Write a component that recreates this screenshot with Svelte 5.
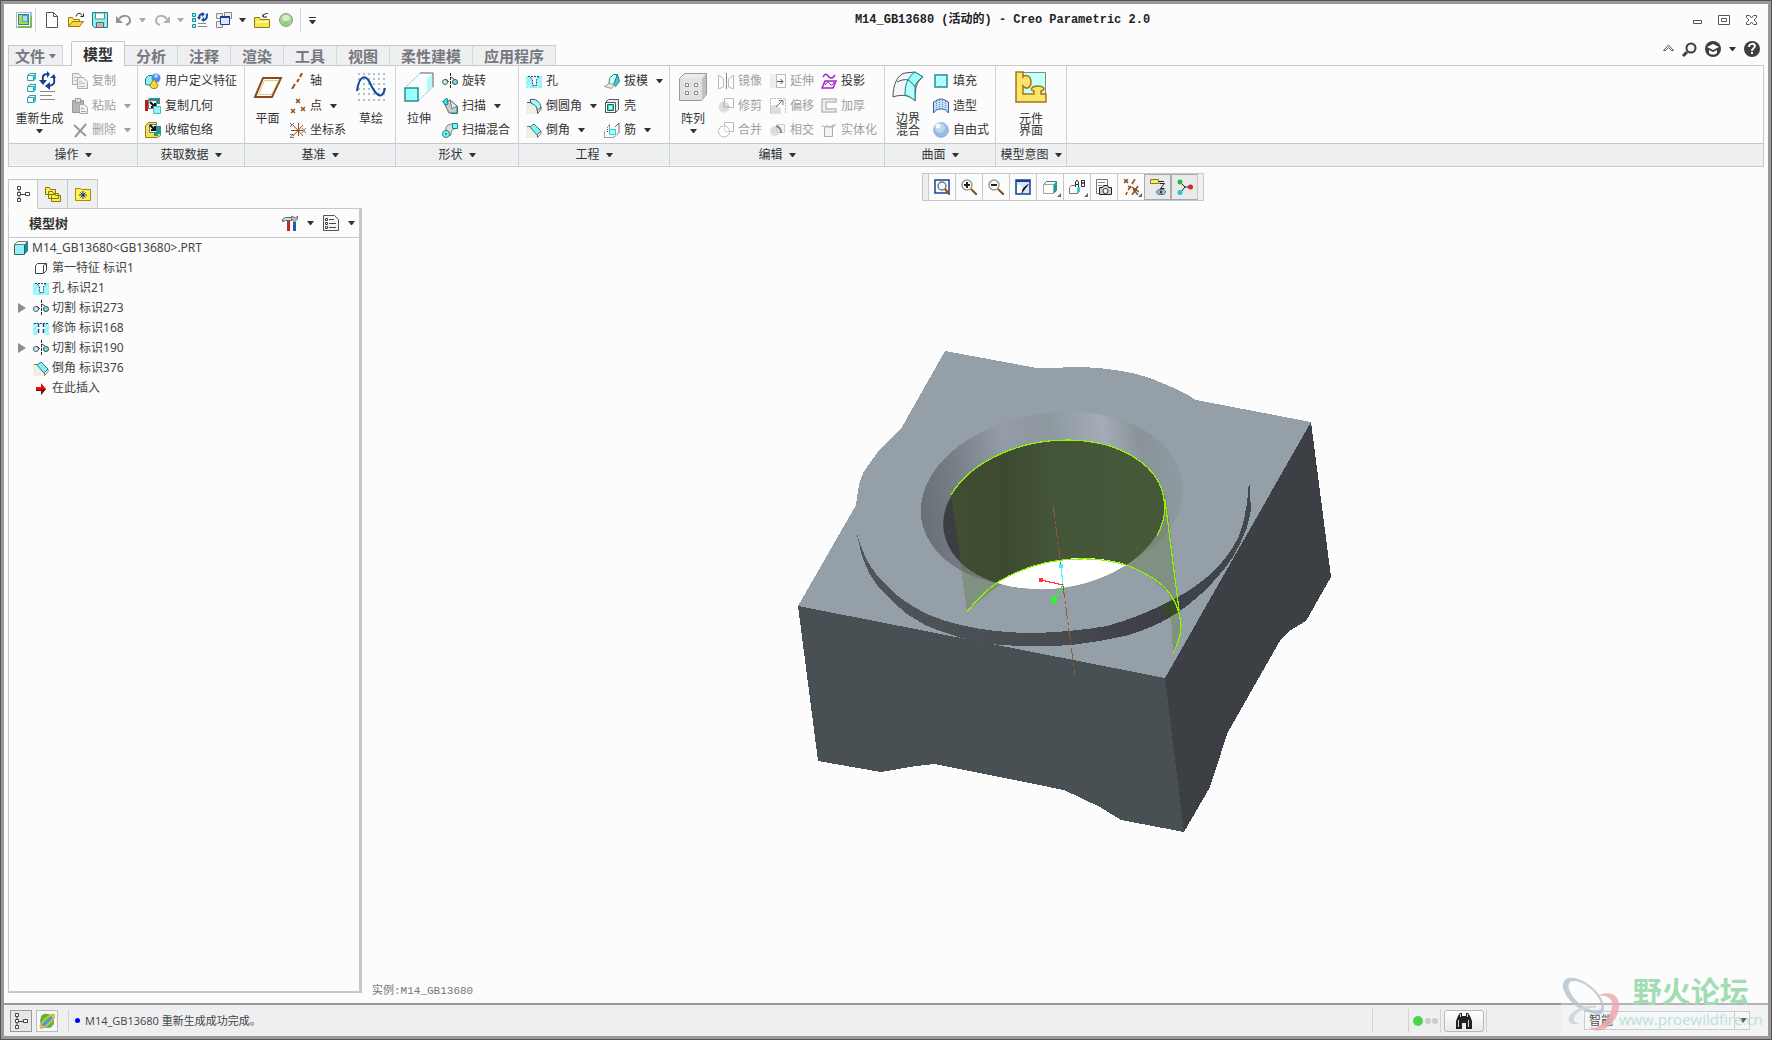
<script lang="ts">
  interface Command {
    label: string;
    icon: string;
    menu?: boolean;
    off?: boolean;
  }

  type Block = { big: Command } | { rows: Command[] };

  interface Group {
    id: string;
    label: string;
    blocks: Block[];
  }

  const tabs = ['模型', '分析', '注释', '渲染', '工具', '视图', '柔性建模', '应用程序'];
  let activeTab = $state('模型');
  let filter = $state('智能');

  const groups: Group[] = [
    {
      id: 'ops',
      label: '操作',
      blocks: [
        { big: { label: '重新生成', icon: 'regen', menu: true } },
        {
          rows: [
            { label: '复制', icon: 'copy', off: true },
            { label: '粘贴', icon: 'paste', menu: true, off: true },
            { label: '删除', icon: 'remove', menu: true, off: true },
          ],
        },
      ],
    },
    {
      id: 'data',
      label: '获取数据',
      blocks: [
        {
          rows: [
            { label: '用户定义特征', icon: 'udf' },
            { label: '复制几何', icon: 'copygeom' },
            { label: '收缩包络', icon: 'shrink' },
          ],
        },
      ],
    },
    {
      id: 'datum',
      label: '基准',
      blocks: [
        { big: { label: '平面', icon: 'plane' } },
        {
          rows: [
            { label: '轴', icon: 'axis' },
            { label: '点', icon: 'point', menu: true },
            { label: '坐标系', icon: 'csys' },
          ],
        },
        { big: { label: '草绘', icon: 'sketch' } },
      ],
    },
    {
      id: 'shape',
      label: '形状',
      blocks: [
        { big: { label: '拉伸', icon: 'extrude' } },
        {
          rows: [
            { label: '旋转', icon: 'revolve' },
            { label: '扫描', icon: 'sweep', menu: true },
            { label: '扫描混合', icon: 'blend' },
          ],
        },
      ],
    },
    {
      id: 'eng',
      label: '工程',
      blocks: [
        {
          rows: [
            { label: '孔', icon: 'hole' },
            { label: '倒圆角', icon: 'round', menu: true },
            { label: '倒角', icon: 'chamfer', menu: true },
          ],
        },
        {
          rows: [
            { label: '拔模', icon: 'draft', menu: true },
            { label: '壳', icon: 'shell' },
            { label: '筋', icon: 'rib', menu: true },
          ],
        },
      ],
    },
    {
      id: 'edit',
      label: '编辑',
      blocks: [
        { big: { label: '阵列', icon: 'pattern', menu: true } },
        {
          rows: [
            { label: '镜像', icon: 'mirror', off: true },
            { label: '修剪', icon: 'trim', off: true },
            { label: '合并', icon: 'merge', off: true },
          ],
        },
        {
          rows: [
            { label: '延伸', icon: 'extend', off: true },
            { label: '偏移', icon: 'offset', off: true },
            { label: '相交', icon: 'intersect', off: true },
          ],
        },
        {
          rows: [
            { label: '投影', icon: 'project' },
            { label: '加厚', icon: 'thicken', off: true },
            { label: '实体化', icon: 'solidify', off: true },
          ],
        },
      ],
    },
    {
      id: 'surf',
      label: '曲面',
      blocks: [
        { big: { label: '边界\n混合', icon: 'boundary' } },
        {
          rows: [
            { label: '填充', icon: 'fill' },
            { label: '造型', icon: 'style' },
            { label: '自由式', icon: 'ball' },
          ],
        },
      ],
    },
    {
      id: 'intent',
      label: '模型意图',
      blocks: [{ big: { label: '元件\n界面', icon: 'component' } }],
    },
  ];

  const tree = [
    { label: '第一特征 标识1', icon: 'feature' },
    { label: '孔 标识21', icon: 'hole' },
    { label: '切割 标识273', icon: 'revolve', branch: true },
    { label: '修饰 标识168', icon: 'cosmetic' },
    { label: '切割 标识190', icon: 'revolve', branch: true },
    { label: '倒角 标识376', icon: 'chamfer' },
    { label: '在此插入', icon: 'insert' },
  ];

  const viewTools = [
    { title: '重新调整', icon: 'refit' },
    { title: '放大', icon: 'zoomin' },
    { title: '缩小', icon: 'zoomout' },
    { title: '重画', icon: 'repaint' },
    { title: '显示样式', icon: 'display', more: true },
    { title: '已命名视图', icon: 'named', more: true },
    { title: '视图管理器', icon: 'camera' },
    { title: '基准显示', icon: 'datums', more: true },
    { title: '注释显示', icon: 'notes', on: true },
    { title: '旋转中心', icon: 'spin', on: true },
  ];

  const cross = (x: number, y: number) => `M${x} ${y}l4 4m0-4l-4 4`;

  // 32-unit drawings, everything else sits on a 16-unit grid
  const large = ['regen', 'plane', 'sketch', 'extrude', 'pattern', 'boundary', 'component'];

  const icons: Record<string, string> = {
    app: '<path fill="#9fc0dd" d="M0 0h16v16H0z"/><path fill="#fff" d="M1 1h13v13H1z"/><path fill="#2c8794" d="M2 2h11v11H2z"/><path fill="#b4dc3c" d="M3 3h9v9H3z"/><path fill="#4c9fc0" d="M6 3h6v7H6z"/><path fill="#a7dcea" d="M7 4h4v5H7z"/><path fill="#82b94f" d="M2 14h14v2H2zM14 4h2v11h-2z"/>',
    new: '<path fill="#fff" stroke="#555" d="M2.500.5h7l4 4v11h-11z"/><path fill="none" stroke="#555" d="M9.500.5v4h4"/>',
    open: '<path fill="#ffe95a" stroke="#9a7a1c" d="M.5 14.500v-9h4l1 2h6v2"/><path fill="#f6d83c" stroke="#9a7a1c" d="M.5 14.500l4-5h11l-4 5z"/><path fill="none" stroke="#222" d="M8 4.500c1-4 5-4 6-1m1.500-2v3h-3"/>',
    save: '<path fill="#8ff0f3" stroke="#1b7d88" d="M.5.5h15v15H2.500l-2-2z"/><path fill="#fff" stroke="#4f8e96" d="M3.500 1h9v6h-9z"/><path fill="#bbb" stroke="#666" d="M4.500 10.500h7v5h-7z"/>',
    undo: '<path fill="none" stroke="#929498" stroke-width="2" d="M3 7c4-5 11-4 11 2 0 2-1 3-4 4"/><path fill="#929498" d="M0 4v7h7z"/>',
    redo: '<path fill="none" stroke="#b0b2b6" stroke-width="2" d="M13 7C9 2 2 3 2 9c0 2 1 3 4 4"/><path fill="#b0b2b6" d="M16 4v7H9z"/>',
    regenSmall: '<g fill="#8ff5f7" stroke="#148f96"><path d="M.5 1.500h3v3h-3zM.5 6.500h3v3h-3zM.5 12.500h3v3h-3z"/></g><path fill="none" stroke="#1a4a9c" stroke-width="2" d="M7 6c0-3 1-4 4-4m4 1c0 3-1 5-4 5"/><path fill="#1a4a9c" d="M10 0v5l3-3zM5 5h4L7 8zM13 3h3V1zM12 5v5L9 8z"/><path stroke="#888" d="M6 11.500h8M6 14.500h9"/>',
    windows: '<g fill="#eee" stroke="#888"><path d="M.5 1.500h6v5h-6zM8.500.5h7v6h-7zM.5 9.500h6v6h-6z"/></g><path fill="#dbe6fb" stroke="#1a3f94" d="M4.500 4.500h9v8h-9z"/><path fill="#1a3f94" d="M4 4h10v2H4z"/>',
    closeFolder: '<path fill="#f9e64a" stroke="#8e7a18" d="M.5 15.500v-10h5l1 2h9v8z"/><path fill="#fff59a" d="M2 9h12v2H2z"/><path fill="none" stroke="#222" d="M9 4.500c1-3 3-3 5-3M9 2v3h4"/>',
    greenBall: '<circle cx="8" cy="8" r="6.500" fill="#a9cf98" stroke="#8b9b85"/><ellipse cx="8" cy="6" rx="4" ry="3" fill="#d5ecca"/><ellipse cx="8" cy="11" rx="3" ry="2" fill="#8fd070"/>',
    regen: '<g fill="#e6ffff" stroke="#3b9a9f"><path d="M3.500 4.500h6v5h-6zM3.500 15.500h6v5h-6zM3.500 26.500h6v5h-6z"/></g><path fill="#1fc4cc" d="M10 4l2-2v6l-2 2zM10 15l2-2v6l-2 2zM10 26l2-2v6l-2 2z"/><path fill="none" stroke="#3b9a9f" d="M4 4l2-1.500h6M4 15l2-1.500h6M4 26l2-1.500h6"/><path fill="none" stroke="#173f93" stroke-width="2" d="M19 10c-1-5 0-7 5-7m6 4c1 5 0 7-5 8"/><path fill="#173f93" d="M23 0v7l3-4zM15 9h8l-4 5zM26 7h6l-2-4zM26 11v8l-5-4z"/><path stroke="#888" d="M16 20.500h15M16 24.500h12M16 28.500h15"/>',
    copy: '<g fill="#eee" stroke="#aaa"><path d="M.5.5h6l3 3v8h-9z"/><path d="M5.500 4.500h6l4 4v7h-10z"/></g><path stroke="#bbb" d="M2 4.500h4M2 7.500h3M7 8.500h3M7 10.500h6M7 13.500h6"/>',
    paste: '<path fill="#b5b5b5" stroke="#999" d="M.5 2.500h11v12H.5z"/><path fill="#ddd" stroke="#999" d="M3.500.5h5v4h-5z"/><path fill="#eee" stroke="#aaa" d="M7.500 6.500h5l3 3v6h-8z"/><path stroke="#aaa" d="M9 10.500h3M9 13.500h5"/>',
    remove: '<path fill="none" stroke="#999" stroke-width="2" d="M2 3l12 11M14 2L3 15"/>',
    udf: '<path fill="#8ff0f3" stroke="#188" d="M.5 5.500l3-3h6v6l-3 4-6-1z"/><circle cx="11" cy="5" r="4.500" fill="#4a8fe8"/><circle cx="11" cy="3" r="2" fill="#a9cdfa"/><path fill="#f2d548" stroke="#977d10" d="M9 6l4 6c0 5-8 5-8 0z"/>',
    copygeom: '<path fill="#2a8f93" d="M3 1l2-1h10v6H3z"/><path fill="#c61a1a" d="M0 2h3v11H0z"/><path fill="#d9ffff" stroke="#777" d="M3.500 2.500h8v8h-8z"/><path fill="none" stroke="#111" stroke-width="2" d="M5 4l5 5M10 5v4H6"/><path fill="#8ff5f7" stroke="#59b7bb" d="M8.500 8.500h7v7h-7z"/>',
    shrink: '<path fill="#f4e04c" stroke="#94801d" d="M.5 3.500l3-3h8v4l4 1v8l-3 2H.5z"/><path fill="#d9ffff" stroke="#777" d="M4.500 2.500h7v8h-7z"/><path fill="none" stroke="#111" stroke-width="2" d="M5 3l5 5M10 4v4H6"/><path fill="#1b9a9e" d="M12 4h4v8h-4zM9 10h4v4H9z"/>',
    plane: '<path fill="#fff" stroke="#8a4a20" stroke-width="2" d="M11 7h18l-9 19H3z"/><path fill="none" stroke="#d7cf86" d="M12.500 9.500h14l-7 14h-13z"/>',
    axis: '<path stroke="#96501e" stroke-width="2" d="M12 0l-2 4M9 6l-2 3M5 11l-3 5"/>',
    point: `<path fill="none" stroke="#96501e" stroke-width="1.500" d="${cross(6, 1)}${cross(1, 11)}${cross(11, 9)}"/>`,
    csys: '<path fill="none" stroke="#96501e" d="M8.500 1v13M1 8.500h12M3 3l10 11M13 3L3 14"/><path fill="none" stroke="#777" d="M0 1l2 2M4 1L0 5M12 6l4 5M16 6l-4 5M0 12.500h3l-3 3h4"/>',
    sketch: '<path fill="none" stroke="#aebfd0" stroke-width="2" stroke-dasharray="2 3" d="M3 3h28M3 8h28M3 13h28M3 18h28M3 23h28M3 29h28"/><path fill="none" stroke="#174a9a" stroke-width="2" d="M2 20C4 4 11 3 15 12c5 11 12 19 15 5"/>',
    extrude: '<path fill="#f4fefe" stroke="#aaa" stroke-dasharray="2 1" d="M2 17L17 2h13v14L15 30z"/><path fill="#b2f8f8" d="M30 2v14l-6 5V8z"/><path fill="#9affff" stroke="#298d91" stroke-width="1.500" d="M2 17h13v13H2z"/><path fill="none" stroke="#777" d="M17 2h13v14"/>',
    revolve: '<path fill="none" stroke="#222" stroke-dasharray="3 1" d="M8.500 0v16"/><circle cx="3" cy="9" r="2.500" fill="#baf8fa" stroke="#555"/><circle cx="13" cy="9" r="2.500" fill="#70e5e8" stroke="#444"/><path fill="none" stroke="#444" d="M4 6l3 3m2-5l3 2"/>',
    sweep: '<path fill="#ccc" stroke="#666" d="M2 5l6-3 7 6v7H7z"/><path fill="#d5f4f4" stroke="#777" d="M8 2l7 6-5 3z"/><path fill="#48dfdd" stroke="#108888" d="M.5 3.500L5 0l1 6-2 1z"/><path fill="none" stroke="#188" d="M15.500 8v7.500H9"/>',
    blend: '<path fill="#ddd" stroke="#777" d="M4 14V7c0-4 3-5 8-5l3 4c-5 1-6 3-6 7z"/><path fill="#8ff0f3" stroke="#188" d="M10.500 1.500h5v5h-5z"/><circle cx="4" cy="12" r="3.500" fill="#8ff0f3" stroke="#188"/><circle cx="4" cy="12" r="1" fill="#176"/>',
    hole: '<path fill="#8df3f6" d="M0 3h4l2 4v6h5V7l2-4h3v12H0z"/><path stroke="#d8ffff" d="M0 8l4-4M0 14l5-6M2 15l4-4M11 11l4-5M11 15l5-6"/><path fill="none" stroke="#17488e" stroke-dasharray="2 1" d="M2 3.500h12M4.500 4L6.500 7v5.500h4V7l2-3"/>',
    cosmetic: '<path fill="#8df3f6" d="M0 3h4v12H0zM12 3h4v12h-4z"/><path stroke="#d8ffff" d="M0 8l4-4M0 14l4-5M12 9l4-5M12 15l4-5"/><path fill="none" stroke="#17488e" stroke-width="1.500" stroke-dasharray="4 2" d="M5.500 3v12M10.500 3v12"/><path stroke="#17488e" stroke-dasharray="2 1" d="M1 3.500h14"/>',
    round: '<path fill="#f0efe5" d="M0 5h7l5 5v6H0z"/><path fill="#9ff" stroke="#555" d="M4 1.500c6-1 10 2 11 8l-4 3c0-4-2-6-6-7z"/><path fill="none" stroke="#555" d="M1 4.500h4M11.500 12v3.500l3.500-4V9"/>',
    chamfer: '<path fill="#f0efe5" d="M0 5h6l6 6v5H0z"/><path fill="#86efef" stroke="#1a8588" d="M4 5l4-3 7 7-4 4z"/><path fill="none" stroke="#777" d="M1 4.500h4M11.500 12v3.500l3.500-4V9"/>',
    draft: '<path fill="#d9ffff" stroke="#188" d="M5.500 5.500l4-4h4l-3 10H5z"/><path fill="#42cccc" stroke="#188" d="M13.500 1.500l2 7-4 5-2-2z"/><path fill="#eceade" stroke="#999" d="M.5 13.500l5-3 5 1-3 4z"/>',
    shell: '<path fill="#eee" stroke="#555" d="M1.500 4.500l3-3h10v10l-3 3h-10z"/><path fill="#fff" stroke="#555" d="M1.500 4.500h10v10h-10z"/><path fill="#48dcdc" stroke="#174" d="M3.500 6.500h6v6h-6z"/><path fill="#c9ffff" d="M5 8h3v3H5z"/>',
    rib: '<path fill="none" stroke="#444" stroke-dasharray="1 1" d="M.5 9.500v6h10M3.500 10V5.500l2-3v5h6v3M10 15l5-4"/><path fill="#9ff" stroke="#3ccccc" d="M5.500 7.500h6v5h-6z"/><path fill="none" stroke="#666" d="M11 5l4-4v10"/>',
    pattern: '<path fill="#e2e2e4" stroke="#999" d="M2.500 7.500l5-5h22v21l-5 6h-22z"/><path fill="#bfc0c3" d="M25 8l4-5v20l-4 5z"/><path fill="#ececee" d="M4 7l4-4h20l-4 4z"/><g fill="#fff" stroke="#888"><path d="M8.500 12.500h3v3h-3zM17.500 12.500h3v3h-3zM8.500 20.500h3v3h-3zM17.500 20.500h3v3h-3z"/></g>',
    mirror: '<path fill="none" stroke="#bbb" d="M.5 2l5 4v8l-5 2zM15.500 2l-5 4v8l5 2z"/><path stroke="#888" d="M8.500 0v16"/>',
    trim: '<path fill="#fff" stroke="#bbb" d="M6.500.5h9v9h-9z"/><circle cx="6" cy="9" r="5.500" fill="#ddd"/><path fill="none" stroke="#aaa" d="M6 3.500v5.500h6"/>',
    merge: '<path fill="#fff" stroke="#bbb" d="M6.500.5h9v9h-9z"/><circle cx="6" cy="9.500" r="5.500" fill="#fff" stroke="#bbb"/><path fill="none" stroke="#ddd" d="M6.500 4v5.500H11"/>',
    extend: '<path fill="#eee" d="M0 1h7v14H0z"/><path fill="none" stroke="#bbb" d="M6.500 1.500h9v13h-9z"/><path fill="none" stroke="#555" d="M7 8.500h6M10.500 6l2.500 2.500-2.500 2.500"/>',
    offset: '<path fill="#ddd" d="M0 7h6l5 4v5H0z"/><path fill="none" stroke="#bbb" stroke-dasharray="2 1" d="M.5 15V.5h15V15"/><path fill="none" stroke="#777" d="M6 9l7-7M9 2.500h4V7"/>',
    intersect: '<circle cx="5" cy="9" r="5" fill="#ddd"/><path fill="#f2f2f2" stroke="#ccc" d="M7.500 2.500h7v8h-7z"/><path fill="none" stroke="#888" stroke-width="2" d="M6 4c4 1 5 3 5 7"/>',
    project: '<path fill="none" stroke="#a41fd8" stroke-width="1.500" d="M2 4c3-5 4-2 6 0s4 1 6-2"/><path fill="none" stroke="#a41fd8" stroke-width="1.500" d="M4 8h11l-3 7H1z"/><path fill="none" stroke="#56256c" d="M4 12c2-4 4-3 5-1s3 1 4-2"/>',
    thicken: '<path fill="#f1f1f1" stroke="#bbb" stroke-width="1.500" d="M15 1H1v13h14v-3H5V4h10z"/>',
    solidify: '<path fill="#f3f3f3" stroke="#aaa" d="M3.500 14.500v-9l3-2 2 2 4-3-1 3v9z"/><path fill="none" stroke="#aaa" d="M0 5c2-3 4 1 6 0s6 2 9-3"/>',
    boundary: '<path fill="#f1f5f5" stroke="#555" d="M1 26C1 14 5 4 13 2l10-1 8 5c-7 5-8 12-8 24-5-6-14-7-22-4z"/><path fill="#9ff" stroke="#167d81" d="M16 9c2-4 4-6 7-8l8 5c-5 3-7 6-8 10-2-3-5-5-7-7z"/><path fill="#b5ffff" stroke="#167d81" d="M13 24c0-7 1-11 3-15 3 2 5 4 7 7v14c-3-3-6-5-10-6z"/><path fill="none" stroke="#555" d="M5 11c4-2 8-3 11-2"/>',
    fill: '<path fill="#baffff" stroke="#1a9296" stroke-width="1.500" d="M2 2h12v12H2z"/><path stroke="#8eeef0" d="M3 10l7-7M6 13l7-7"/>',
    style: '<path fill="#c8dcf3" stroke="#345f95" d="M.5 15V4C4 3 4 1 8 1s4 2 7.500 3v11C13 12 12 11 8 11s-5 1-7.500 4z"/><path stroke="#5f8fc7" stroke-dasharray="1 1" d="M3.500 3v9M6.500 2v9M9.500 2v9M12.500 3v9"/>',
    ball: '<circle cx="8" cy="8" r="7.500" fill="#97b9e2" stroke="#7d9fc8" stroke-width=".5"/><circle cx="7" cy="6" r="5" fill="#bdd7f2"/><circle cx="5" cy="4" r="2.500" fill="#f4faff"/>',
    component: '<path fill="#c7ffff" stroke="#7b8f71" d="M1.500 1.500h29v29h-29z"/><path fill="#fbe568" stroke="#a37514" stroke-width="1.500" d="M1 1h7v5c3-3 8-1 8 5s-5 8-8 4v8h11v-3c-5-1-2-5 4-5s8 4 3 5v3h5v8H1z"/>',
    tree: '<g fill="#fff" stroke="#444"><path d="M2.500.5h3v3h-3zM2.500 6.500h3v3h-3zM2.500 12.500h3v3h-3zM10.500 6.500h4v3h-4z"/><path d="M4 4v2M4 10v2M6 8.500h4"/></g>',
    folders: '<g fill="#fdf14c" stroke="#8b7412"><path d="M.5 8.500v-7h4l1 2h5v5zM3.500 12.500v-7h4l1 2h5v5zM6.500 15.500v-7h3l1 1h5v6z"/></g>',
    star: '<path fill="#fdf14c" stroke="#a18c12" d="M.5 14.500v-12h5l1 1h9v11z"/><path stroke="#102e97" d="M8 5v8M4 9h8M5.500 6.500l5 5M10.500 6.500l-5 5"/>',
    tools: '<path fill="#c52819" d="M5 6h3v10H5z"/><path fill="#cde3e1" stroke="#566" d="M.5 6.500v-2l3-2h6v3h-6z"/><path fill="#225caf" d="M11 7h3v9h-3z"/><path fill="#bbb" stroke="#777" d="M9.500 1v3l3 3 3-3V1l-2 2z"/>',
    list: '<path fill="#f6f8ef" stroke="#555" d="M.5.5h11l4 4v11H.5z"/><path stroke="#444" d="M6 4.500h5M6 8.500h7M6 12.500h7"/><path fill="none" stroke="#444" d="M2.500 3.500h2v2h-2zM2.500 7.500h2v2h-2zM2.500 11.500h2v2h-2z"/>',
    part: '<path fill="#0b9599" d="M12 4l3-3v10l-3 3z"/><path fill="#8ff5f7" stroke="#555" d="M1.500 4.500h10v10h-10z"/><path fill="#efffff" stroke="#777" d="M1.500 4.500l3-3h10l-3 3z"/>',
    feature: '<path fill="#17979a" d="M10 6l3-3v7l-3 3z"/><path fill="#fff" stroke="#444" d="M2.500 5.500l2-2h9v7l-3 3h-8zM10.500 13V5.500l3-2"/>',
    insert: '<path fill="#e50c0c" d="M3 7h5V3l5 6-5 6v-4H3z"/><path fill="#7b0808" d="M3 10h5v-1h5l-5 6v-4H3z"/>',
    refit: '<path fill="#fff" stroke="#1d418f" stroke-width="1.500" d="M1 1h14v13H1z"/><circle cx="8" cy="7" r="4" fill="#eefbff" stroke="#777" stroke-width="1.500"/><path stroke="#86501d" stroke-width="2" d="M11 10l5 6"/>',
    zoomin: '<circle cx="6" cy="6" r="5" fill="#fff" stroke="#999" stroke-width="1.500"/><path stroke="#222" stroke-width="2" d="M3 6h6M6 3v6"/><path stroke="#86501d" stroke-width="2" d="M10 10l6 6"/>',
    zoomout: '<circle cx="6" cy="6" r="5" fill="#fff" stroke="#999" stroke-width="1.500"/><path stroke="#222" stroke-width="2" d="M3 6h6"/><path stroke="#86501d" stroke-width="2" d="M10 10l6 6"/>',
    repaint: '<path fill="#d3e7f8" stroke="#17408f" stroke-width="1.500" d="M1 1h14v14H1z"/><path fill="#17408f" d="M1 1h14v2H1z"/><path fill="#fff" d="M2 14V6c5 0 7 2 4 8z"/><path stroke="#333" stroke-dasharray="1 1" d="M7 14c0-3 1-6 7-9"/>',
    display: '<path fill="#e6ffff" stroke="#578" d="M1.500 5.500l3-3h10v9l-3 3h-10z"/><path fill="#1a9b9e" d="M11 6l4-4v9l-4 4z"/><path fill="#fff" stroke="#9aa" d="M1.500 5.500h10v9h-10z"/>',
    named: '<path fill="#fff" stroke="#777" d="M.5 14.500v-6l2-2h8v6l-2 2z"/><path fill="#36cccc" d="M8 9l3-2v5l-3 3z"/><path fill="#fff" d="M6 0h10v8H6z"/><path fill="none" stroke="#333" d="M6.500 8V3L8 1l1.500 2v5M7 5.500h2M12.500 1v6.500h3V4h-3 3V1.500h-3"/>',
    camera: '<path fill="#fff" stroke="#777" d="M.5.5h11v14H.5z"/><path stroke="#888" d="M2 3.500h7M2 6.500h4"/><path fill="#ccc" stroke="#222" d="M3.500 8.500h3l1-2h4l1 2h3v7h-12z"/><circle cx="9.500" cy="12" r="2.500" fill="#fff" stroke="#333"/>',
    datums: `<path fill="none" stroke="#86501d" stroke-width="1.500" d="${cross(1, 0)}M12 0l-3 5M8 7l-3 4M4 13l-1 3M5 7l3 2M10 10l5 6M15 7l-6 9M9 8l7 5"/>`,
    notes: '<path fill="#f8ef69" stroke="#8e7a18" d="M.5.5h8v4h-8z"/><path fill="none" stroke="#222" d="M9 2.500h5M9.500 4.500h5l-4 5h4"/><ellipse cx="11" cy="13" rx="4.500" ry="2.500" fill="#b9c6d1" stroke="#536679"/><circle cx="11" cy="13" r="1.500" fill="#25425b"/>',
    spin: '<path fill="none" stroke="#222" d="M3 3l5 5h6M8 8l-5 6"/><circle cx="3" cy="3" r="2.500" fill="#23bd28"/><circle cx="13.500" cy="8" r="2.500" fill="#e32121"/><circle cx="3" cy="13.500" r="2.500" fill="#24c8c8"/>',
    globe: '<circle cx="8" cy="8" r="7" fill="#36a6e1"/><path fill="#59b82c" d="M2 3c4-4 8-2 10 0l-4 4-6 3zM9 14l5-7 1 4-4 4z"/><path fill="none" stroke="#e2b82a" stroke-width="2" d="M2 15c-3-3 9-15 13-13 2 3-8 13-13 13z"/>',
    binoculars: '<path fill="#222" d="M2 3l2-3h2v3h4V0h2l2 3 2 5v8h-6v-6H8L6 10v6H0V8z"/><path fill="#d7dbc5" d="M2 7h1v7H2zM12 7h1v7h-1zM4 1h1v3H4zM11 1h1v3h-1z"/>',
    up: '<path fill="#fff" stroke="#555" d="M2.500 9.500L7.500 4l5 5.500h-2l-3-3-3 3z"/>',
    search: '<circle cx="10" cy="7" r="4.500" fill="#eff9fd" stroke="#3d3e40" stroke-width="2"/><path stroke="#3d3e40" stroke-width="3" d="M6 11l-4 4"/>',
    learn: '<circle cx="8" cy="8" r="8" fill="#3d3e40"/><path fill="#fff" d="M2 6l6-3 6 3-6 3zM4 9l4 2 4-2v3c-2 2-6 2-8 0z"/>',
    help: '<circle cx="8" cy="8" r="8" fill="#3d3e40"/><path fill="none" stroke="#fff" stroke-width="2" d="M5 6c0-4 6-4 6-1 0 2-3 2-3 5M8 11v2"/>',
    minimise: '<path fill="#fff" stroke="#555" d="M4.500 8.500h8v3h-8z"/>',
    maximise: '<path fill="#fff" stroke="#555" d="M2.500 3.500h11v9h-11zM5.500 6.500h5v3h-5z"/>',
    close: '<path fill="#fff" stroke="#555" d="M3.500 3.500h3L8.500 6l2-2.500h3v2L11 8l2.500 2.500v2h-3L8.500 10l-2 2.500h-3v-2L6 8 3.500 5.500z"/>',
  };
</script>

{#snippet icon(name: string)}
  {@const size = large.includes(name) ? 32 : 16}
  <svg class="icon" width={size} height={size} viewBox="0 0 {size} {size}" aria-hidden="true">
    {@html icons[name]}
  </svg>
{/snippet}

{#snippet caret()}
  <svg class="caret" width="7" height="4" viewBox="0 0 7 4" aria-hidden="true">
    <path fill="currentColor" d="M0 0h7L4 4H3z" />
  </svg>
{/snippet}

<div class="frame">
  <div class="window">
    <header class="titlebar">
      <div class="quick">
        <button class="quick__app" aria-label="Creo">{@render icon('app')}</button>
        <button aria-label="新建">{@render icon('new')}</button>
        <button aria-label="打开">{@render icon('open')}</button>
        <button aria-label="保存">{@render icon('save')}</button>
        <button class="dim" aria-label="撤消">{@render icon('undo')}{@render caret()}</button>
        <button class="dim" aria-label="重做">{@render icon('redo')}{@render caret()}</button>
        <button aria-label="重新生成">{@render icon('regenSmall')}</button>
        <button aria-label="窗口">{@render icon('windows')}{@render caret()}</button>
        <button aria-label="关闭">{@render icon('closeFolder')}</button>
        <button aria-label="选项">{@render icon('greenBall')}</button>
        <button class="quick__more" aria-label="自定义快速访问工具栏">{@render caret()}</button>
      </div>
      <h1 class="titlebar__name">M14_GB13680 (活动的) - Creo Parametric 2.0</h1>
      <div class="titlebar__controls">
        <button aria-label="最小化">{@render icon('minimise')}</button>
        <button aria-label="最大化">{@render icon('maximise')}</button>
        <button aria-label="关闭窗口">{@render icon('close')}</button>
      </div>
    </header>

    <nav class="tabs">
      <button class="tab tab--file">文件{@render caret()}</button>
      {#each tabs as tab}
        <button class="tab" class:tab--active={tab === activeTab} onclick={() => (activeTab = tab)}>{tab}</button>
      {/each}
      <div class="tabs__help">
        <button aria-label="最小化功能区">{@render icon('up')}</button>
        <button aria-label="搜索">{@render icon('search')}</button>
        <button class="learn" aria-label="学习">{@render icon('learn')}{@render caret()}</button>
        <button aria-label="帮助">{@render icon('help')}</button>
      </div>
    </nav>

    <section class="ribbon">
      {#each groups as group}
        <div class="group">
          <div class="group__body group__body--{group.id}">
            {#each group.blocks as block}
              {#if 'big' in block}
                <button class="big">
                  {@render icon(block.big.icon)}
                  <span class="big__label">{block.big.label}</span>
                  {#if block.big.menu}{@render caret()}{/if}
                </button>
              {:else}
                <div class="rows">
                  {#each block.rows as row}
                    <button class="command" class:command--off={row.off}>
                      {@render icon(row.icon)}
                      <span>{row.label}</span>
                      {#if row.menu}{@render caret()}{/if}
                    </button>
                  {/each}
                </div>
              {/if}
            {/each}
          </div>
          <button class="group__label">{group.label}{@render caret()}</button>
        </div>
      {/each}
      <div class="group">
        <div class="group__body"></div>
        <div class="group__label"></div>
      </div>
    </section>

    <main class="work">
      <aside class="side">
        <div class="side__tabs">
          <button class="side__tab side__tab--active" aria-label="模型树">{@render icon('tree')}</button>
          <button class="side__tab" aria-label="文件夹浏览器">{@render icon('folders')}</button>
          <button class="side__tab" aria-label="收藏夹">{@render icon('star')}</button>
        </div>
        <div class="side__panel">
          <div class="side__head">
            <h2>模型树</h2>
            <button aria-label="设置">{@render icon('tools')}{@render caret()}</button>
            <button aria-label="显示">{@render icon('list')}{@render caret()}</button>
          </div>
          <ul class="tree">
            <li class="tree__root">{@render icon('part')}<span>M14_GB13680&lt;GB13680&gt;.PRT</span></li>
            {#each tree as node}
              <li class="tree__node">
                <span class="tree__toggle" class:tree__toggle--shown={node.branch}></span>
                {@render icon(node.icon)}
                <span>{node.label}</span>
              </li>
            {/each}
          </ul>
        </div>
      </aside>

      <section class="view">
        <div class="viewbar">
          {#each viewTools as tool}
            <button
              class="viewbar__tool"
              class:viewbar__tool--on={tool.on}
              class:viewbar__tool--more={tool.more}
              aria-label={tool.title}
            >
              {@render icon(tool.icon)}
            </button>
          {/each}
        </div>

        <svg class="model" viewBox="362 167 1402 836" shape-rendering="crispEdges" role="img" aria-label="M14_GB13680">
          <defs>
            <linearGradient id="chamfer">
              <stop offset="0" stop-color="#696f77" />
              <stop offset="0.150" stop-color="#767e86" />
              <stop offset="0.350" stop-color="#949ca8" />
              <stop offset="0.530" stop-color="#8e989f" />
              <stop offset="0.730" stop-color="#a4adb7" />
              <stop offset="0.860" stop-color="#899399" />
              <stop offset="1" stop-color="#909aa2" />
            </linearGradient>
            <linearGradient id="bore">
              <stop offset="0" stop-color="#404e31" />
              <stop offset="0.250" stop-color="#3d4a2f" />
              <stop offset="0.450" stop-color="#445438" />
              <stop offset="0.850" stop-color="#475939" />
              <stop offset="1" stop-color="#455636" />
            </linearGradient>
            <linearGradient id="step">
              <stop offset="0" stop-color="#4f5558" />
              <stop offset="0.500" stop-color="#484c51" />
              <stop offset="0.750" stop-color="#3c4045" />
              <stop offset="1" stop-color="#43484c" />
            </linearGradient>
            <clipPath id="mouth">
              <ellipse cx="1054" cy="515" rx="111.400" ry="73.500" transform="rotate(-8.300 1054 515)" />
            </clipPath>
          </defs>
          <path fill="#495053" d="M798 606L1165 678 1184 832 1121 820 1100 807 1064 790 934 764 916 766 881 772 818 761z" />
          <path fill="#3c3f44" d="M1311 422L1331 577 1306 621 1291 630 1281 639 1228 732 1221 753 1210 787 1184 832 1165 678z" />
          <path
            fill="#959fa7"
            d="M945 351L1037 368Q1055 368 1076 367 1130 368 1162 383 1182 391 1196 400L1311 422 1165 678 798 606 856 505 858 490Q861 474 867 467L880 449 902 427z"
          />
          <path
            fill="url(#step)"
            d="M856 530Q860 546 867 560 875 575 889 588 903 602 925 613 942 621 965 626 998 633 1034 633 1072 632 1107 626 1143 616 1176 598 1195 588 1213 572 1229 556 1238 538 1248 514 1249 476L1251 510Q1248 525 1246 530 1240 545 1233 557 1207 595 1169 618 1152 628 1125 636 1098 642 1071 645 1034 648 989 644L958 637 940 631 925 625 907 614 893 602 879 588 869 573 862 556z"
          />
          <ellipse cx="1052" cy="500" rx="132" ry="87" transform="rotate(-8.300 1052 500)" fill="url(#chamfer)" />
          <path
            fill="#507030"
            fill-opacity="0.300"
            d="M951 495H1166L1181 620Q1182 638 1173 653L1170 595Q1146 572 1129 566 1104 558 1080 559 1019 562 967 612z"
          />
          <g clip-path="url(#mouth)">
            <path fill="#3b3f44" d="M940 430H1170V600H940z" />
            <path fill="url(#bore)" d="M951 495V430H1170V600H967z" />
            <ellipse cx="1070" cy="633" rx="111.400" ry="74" transform="rotate(-8.300 1070 633)" fill="#fff" />
          </g>
          <path fill="#344c15" fill-opacity="0.600" d="M1163 606L1176 598 1179 612 1166 619z" />
          <g fill="none" stroke="#91f500" stroke-width="1.200">
            <path d="M951 495A111.400 73.500 -8.300 0 1 1164 500Q1167 517 1157 536M1165 500L1179 610" />
            <path d="M967 612Q981 594 998 582 1036 559 1080 559 1104 558 1129 566 1147 573 1162 585 1179 601 1181 625 1181 639 1173 653" />
          </g>
          <path stroke="#8b5e30" stroke-dasharray="12 3 3 3" d="M1053 506L1061 565M1063 586L1075 675" />
          <path stroke="#50f5f5" stroke-width="1.200" d="M1061 566L1063 585" />
          <path stroke="#ff3434" stroke-width="1.200" d="M1041 580L1063 585" />
          <path stroke="#31f32d" stroke-width="1.200" d="M1054 600L1063 585" />
          <circle cx="1061" cy="566" r="2.500" fill="#35f5ff" />
          <circle cx="1041" cy="580" r="2.500" fill="#ff3030" />
          <circle cx="1054" cy="600" r="3" fill="#26ff26" />
        </svg>
        <p class="view__note">实例:M14_GB13680</p>
      </section>
    </main>

    <footer class="status">
      <button class="status__button status__button--on" aria-label="切换模型树">{@render icon('tree')}</button>
      <button class="status__button" aria-label="切换浏览器">{@render icon('globe')}</button>
      <p class="status__message">M14_GB13680 重新生成成功完成。</p>
      <div class="status__cell status__cell--blank"></div>
      <div class="status__cell status__cell--lights"><i class="lit"></i><i></i><i></i></div>
      <div class="status__cell status__cell--find">
        <button aria-label="查找">{@render icon('binoculars')}</button>
      </div>
      <div class="status__cell status__cell--filter">
        <select aria-label="选择过滤器" bind:value={filter}>
          <option>智能</option>
          <option>特征</option>
          <option>几何</option>
        </select>
      </div>
    </footer>

    <div class="mark">
      <svg width="60" height="56" viewBox="0 0 60 56" aria-hidden="true">
        <g fill-rule="evenodd">
          <path fill="#b5c2cd" d="M5 2C17-4 41 14 43 29 44 38 37 40 31 36 14 34-6 11 5 2zM9 5C3 11 16 29 31 33c7 1 11 0 9-7C36 13 17 0 9 5z" />
          <path fill="#eda6aa" d="M36 19C45 14 57 15 58 27 59 40 46 57 33 53 29 52 28 50 28 50 38 54 49 41 51 30 53 21 44 17 36 19z" />
          <path fill="#c9d2d8" d="M35 29C25 28 11 32 8 41 6 48 15 48 19 46 11 46 11 40 18 35 23 31 29 30 35 31z" />
        </g>
      </svg>
      <div class="mark__text">
        <strong>野火论坛</strong>
        <span>www.proewildfire.cn</span>
      </div>
    </div>
  </div>
</div>

<style>
  :global(body) {
    margin: 0;
  }

  .frame {
    box-sizing: border-box;
    min-height: 100vh;
    padding: 3px;
    display: flex;
    background: #999798;
    border: 1px solid #565455;
    color: #333;
    font: 12px/16px "Open Sans", "Noto Sans CJK SC", sans-serif;
  }

  .window {
    position: relative;
    flex: 1;
    min-width: 0;
    display: flex;
    flex-direction: column;
    background: #fcfcfc;
  }

  button {
    display: flex;
    align-items: center;
    margin: 0;
    padding: 0;
    border: 0;
    background: none;
    color: inherit;
    font: inherit;
    white-space: nowrap;
  }

  h1,
  h2,
  p,
  ul {
    margin: 0;
    padding: 0;
  }

  .icon,
  .caret {
    flex: none;
    display: block;
  }

  .titlebar {
    display: flex;
    align-items: center;
    height: 32px;
    padding: 0 9px 0 12px;
  }

  .quick {
    display: flex;
    align-items: center;
    gap: 8px;
  }

  .quick button {
    height: 24px;
    gap: 7px;
  }

  .quick .quick__app {
    padding-right: 3px;
    border-right: 1px solid #d0d3d6;
  }

  .quick .quick__more {
    padding-left: 8px;
    margin-left: -2px;
    border-left: 1px solid #d0d3d6;
  }

  .quick__more .caret {
    box-sizing: content-box;
    padding-top: 2px;
    border-top: 1px solid #333;
  }

  .dim {
    color: #aaa;
  }

  .titlebar__name {
    flex: 1;
    text-align: center;
    font: bold 12px/16px "Liberation Mono", "Noto Sans CJK SC", monospace;
    color: #222;
  }

  .titlebar__controls {
    display: flex;
    gap: 11px;
  }

  .tabs {
    display: flex;
    align-items: flex-end;
    height: 29px;
    padding: 0 4px;
  }

  .tab {
    box-sizing: border-box;
    justify-content: center;
    height: 20px;
    padding: 0 11px;
    border-top: 1px solid #c6c9cc;
    border-right: 1px solid #d4d7da;
    background: #eeeff1;
    color: #77777f;
    font-weight: 700;
    font-size: 15px;
  }

  .tab--file {
    gap: 4px;
    width: 55px;
    padding: 0;
    margin-right: 8px;
    border-left: 1px solid #c6c9cc;
  }

  .tab--active {
    position: relative;
    height: 25px;
    margin-bottom: -1px;
    border: 1px solid #c6c9cc;
    border-bottom: 0;
    border-radius: 2px 2px 0 0;
    background: #fcfcfc;
    color: #333;
  }

  .tabs__help {
    display: flex;
    align-items: center;
    align-self: flex-start;
    gap: 4px;
    height: 26px;
    margin-left: auto;
    padding-right: 4px;
  }

  .tabs__help .learn {
    gap: 8px;
    margin: 0 4px;
  }

  .ribbon {
    display: grid;
    grid-template-columns: 129px 107px 151px 123px 151px 215px 111px 71px 1fr;
    margin: 0 4px;
    border: 1px solid #c6c9cc;
  }

  .group {
    display: flex;
    flex-direction: column;
    border-right: 1px solid #d0d3d6;
  }

  .group:last-child {
    border-right: 0;
  }

  .group__body {
    display: grid;
    height: 74px;
    padding-top: 3px;
  }

  .group__body--ops {
    grid-template-columns: 61px 1fr;
    column-gap: 2px;
  }

  .group__body--data {
    padding-left: 7px;
  }

  .group__body--datum {
    grid-template-columns: 45px 1fr 48px;
  }

  .group__body--shape {
    grid-template-columns: 46px 1fr;
  }

  .group__body--eng {
    grid-template-columns: 78px 1fr;
    padding-left: 7px;
  }

  .group__body--edit {
    grid-template-columns: 46px 50px 49px 1fr;
    column-gap: 2px;
  }

  .group__body--surf {
    grid-template-columns: 46px 1fr;
    column-gap: 2px;
  }

  .group__label {
    display: flex;
    align-items: center;
    justify-content: center;
    gap: 6px;
    height: 22px;
    border-top: 1px solid #c6c9cc;
    background: #eeeff1;
    color: #333;
  }

  .big {
    flex-direction: column;
    justify-content: flex-start;
  }

  .big .icon {
    margin-top: 2px;
  }

  .big__label {
    margin-top: 10px;
    color: #333;
    line-height: 12px;
    white-space: pre;
  }

  .big .caret {
    margin-top: 4px;
  }

  .rows {
    display: grid;
    grid-template-rows: 24px 25px 24px;
  }

  .command {
    gap: 4px;
  }

  .command .caret {
    margin-left: 4px;
  }

  .command--off {
    color: #a0a0a0;
  }

  .work {
    flex: 1;
    display: flex;
    min-height: 0;
  }

  .side {
    display: flex;
    flex-direction: column;
    width: 354px;
    margin: 12px 0 10px 4px;
  }

  .side__tabs {
    z-index: 1;
    display: flex;
  }

  .side__tab {
    box-sizing: border-box;
    justify-content: center;
    width: 30px;
    height: 30px;
    border: 1px solid #c6c9cc;
    border-left: 0;
    background: #eeeff1;
  }

  .side__tab--active {
    border-left: 1px solid #c6c9cc;
    border-bottom-color: #fcfcfc;
    background: #fcfcfc;
  }

  .side__panel {
    flex: 1;
    margin-top: -1px;
    border: 1px solid #c6c9cc;
    border-right-width: 3px;
    border-bottom-width: 2px;
  }

  .side__head {
    display: flex;
    align-items: center;
    gap: 9px;
    height: 28px;
    padding: 0 4px 0 20px;
    border-bottom: 1px solid #c6c9cc;
  }

  .side__head h2 {
    flex: 1;
    font-size: 13px;
    line-height: 16px;
  }

  .side__head button {
    gap: 9px;
  }

  .tree {
    padding: 0 0 0 4px;
    list-style: none;
    color: #444;
    font-family: "Noto Sans", "Noto Sans CJK SC", sans-serif;
  }

  .tree li {
    display: flex;
    align-items: center;
    height: 20px;
  }

  .tree__root {
    gap: 3px;
  }

  .tree__node {
    gap: 3px;
    padding-left: 5px;
  }

  .tree__toggle {
    width: 12px;
    height: 10px;
  }

  .tree__toggle--shown {
    background: #8c8c8c;
    clip-path: polygon(0 0, 8px 5px, 0 10px);
  }

  .view {
    position: relative;
    flex: 1;
    min-width: 0;
    margin-right: 4px;
  }

  .model {
    position: absolute;
    inset: 0;
    width: 100%;
    height: 100%;
  }

  .viewbar {
    position: absolute;
    z-index: 1;
    top: 6px;
    left: 50%;
    display: flex;
    padding: 0 5px;
    border: 1px solid #c6c9cc;
    background: #eeeff1;
    transform: translateX(-50%);
  }

  .viewbar__tool {
    position: relative;
    box-sizing: border-box;
    justify-content: center;
    width: 27px;
    height: 26px;
    border-left: 1px solid #c6c9cc;
    background: #fcfcfc;
  }

  .viewbar__tool:last-child {
    border-right: 1px solid #c6c9cc;
  }

  .viewbar__tool--on {
    border: 1px solid #aaa;
    background: #e9eaec;
  }

  .viewbar__tool--more::after {
    content: "";
    position: absolute;
    right: 2px;
    bottom: 3px;
    width: 4px;
    height: 4px;
    background: #666;
    clip-path: polygon(100% 0, 100% 100%, 0 100%);
  }

  .view__note {
    position: absolute;
    left: 10px;
    bottom: 4px;
    color: #777;
    font: 11px/16px "Liberation Mono", "Noto Sans CJK SC", monospace;
  }

  .status {
    display: flex;
    align-items: center;
    height: 31px;
    padding: 0 18px 0 6px;
    border-top: 2px solid #999798;
    background: #eeeff1;
  }

  .status__button {
    box-sizing: border-box;
    justify-content: center;
    width: 22px;
    height: 22px;
    margin-right: 4px;
    border: 1px solid #bbb;
    background: #f7f7f7;
  }

  .status__button--on {
    border-color: #999;
    background: #e5e6e8;
  }

  .status__message {
    flex: 1;
    display: flex;
    align-items: center;
    gap: 5px;
    height: 22px;
    margin-left: 6px;
    padding-left: 6px;
    border-left: 1px solid #d0d3d6;
    color: #444;
    font-size: 11px;
  }

  .status__message::before {
    content: "";
    width: 5px;
    height: 5px;
    border-radius: 50%;
    background: #0000f0;
  }

  .status__cell {
    box-sizing: border-box;
    display: flex;
    align-items: center;
    height: 24px;
    border-left: 1px solid #d0d3d6;
  }

  .status__cell--blank {
    width: 36px;
  }

  .status__cell--lights {
    gap: 1px;
    width: 32px;
    padding-left: 4px;
  }

  .status__cell--lights i {
    width: 6px;
    height: 6px;
    border-radius: 50%;
    background: #ccc;
  }

  .status__cell--lights .lit {
    width: 10px;
    height: 10px;
    margin-right: 1px;
    background: #4ad548;
  }

  .status__cell--find {
    width: 46px;
    padding-left: 3px;
  }

  .status__cell--find button {
    box-sizing: border-box;
    justify-content: center;
    width: 40px;
    height: 22px;
    border: 1px solid #b5b8bb;
    border-radius: 3px;
    background: linear-gradient(#fff, #e8e9eb);
  }

  .status__cell--filter {
    justify-content: flex-end;
    width: 264px;
  }

  select {
    box-sizing: border-box;
    width: 166px;
    height: 19px;
    padding: 0 4px;
    appearance: none;
    border: 1px solid #b5b8bb;
    border-radius: 0;
    background: linear-gradient(#b5b8bb, #b5b8bb) right 14px top / 1px 100% no-repeat #f3f4f5;
    color: #000;
    font: inherit;
    line-height: 16px;
  }

  .status__cell--filter::after {
    content: "";
    width: 8px;
    height: 5px;
    margin: 0 3px 0 -11px;
    background: #222;
    clip-path: polygon(0 0, 100% 0, 50% 100%);
    pointer-events: none;
  }

  .mark {
    position: absolute;
    right: 0;
    bottom: 0;
    display: flex;
    box-sizing: border-box;
    width: 207px;
    height: 63px;
    padding-top: 4px;
    background: rgba(252, 252, 252, 0.3);
    pointer-events: none;
  }

  .mark svg {
    flex: none;
    opacity: 0.8;
  }

  .mark__text {
    display: flex;
    flex-direction: column;
    align-items: flex-end;
    margin-left: -2px;
  }

  .mark strong {
    margin-right: 14px;
    color: #a1dcb5;
    font-size: 29px;
    line-height: 30px;
  }

  .mark span {
    color: #b9e1d9;
    font-size: 15px;
    line-height: 24px;
  }
</style>
